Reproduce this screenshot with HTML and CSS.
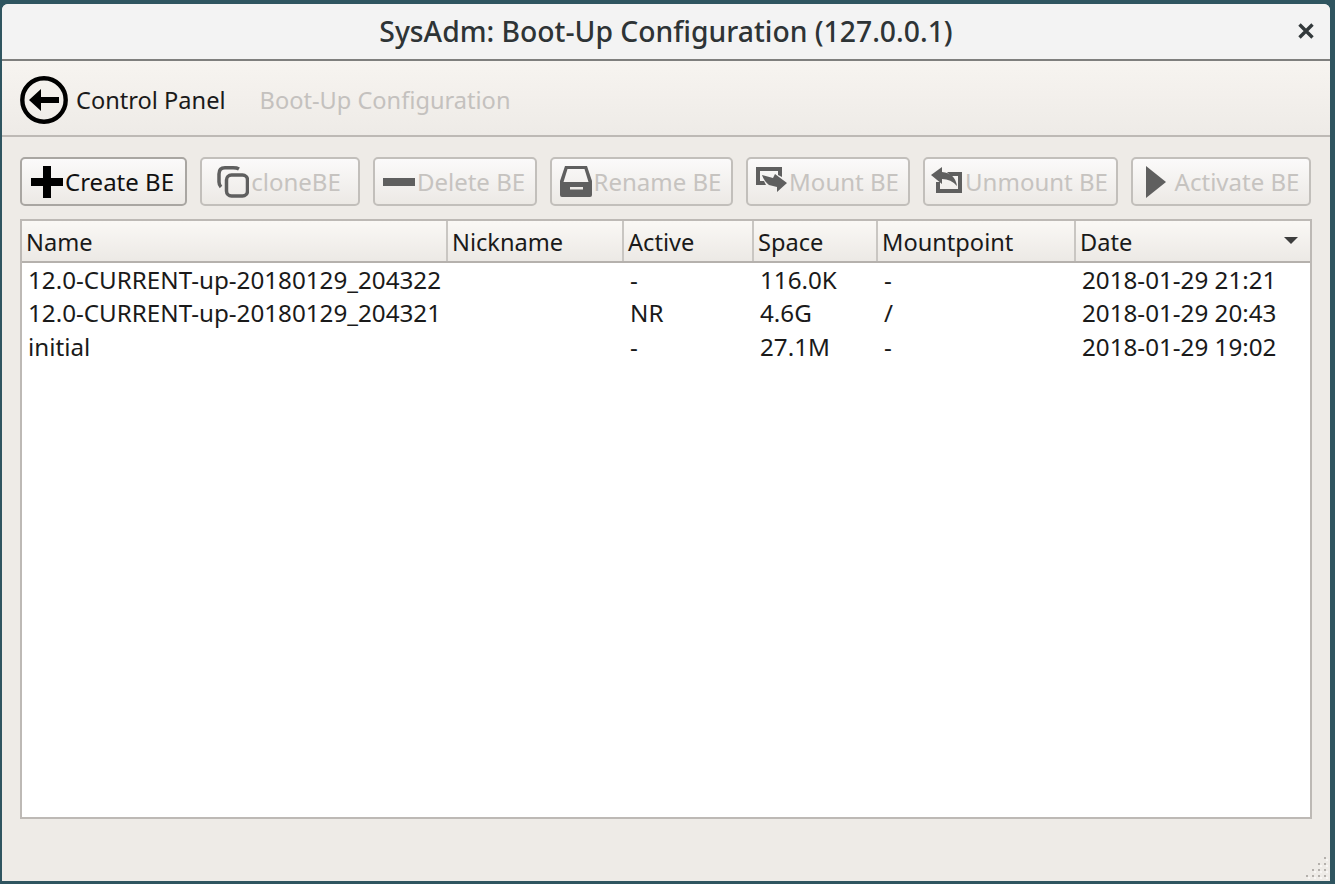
FILE: index.html
```html
<!doctype html>
<html>
<head>
<title>SysAdm: Boot-Up Configuration (127.0.0.1)</title>
<link rel="stylesheet" href="styles.css">
</head>
<body>

<div class="window">

  <div class="titlebar">
    <span class="title">SysAdm: Boot-Up Configuration (127.0.0.1)</span>
    <svg class="close" width="16" height="16" viewBox="0 0 16 16"><path d="M1.5 1.5 L14.500 14.500 M14.500 1.500 L1.500 14.500" stroke="#33393b" stroke-width="3.4" fill="none"/></svg>
  </div>

  <div class="crumbs">
    <svg class="back" width="50" height="50" viewBox="0 0 50 50">
      <circle cx="25" cy="25" r="21.7" stroke="#000" stroke-width="4.4" fill="none"/>
      <path d="M10 25 L22 14 V22 H40 V28 H22 V36 Z" fill="#000"/>
    </svg>
    <span class="crumb">Control Panel</span>
    <span class="crumb off">Boot-Up Configuration</span>
  </div>

  <div class="content">
    <div class="toolbar">
      <button class="btn on">
        <svg width="32" height="32" viewBox="0 0 32 32"><path d="M12 0 H20 V12 H32 V20 H20 V32 H12 V20 H0 V12 H12 Z" fill="#000"/></svg>
        <span>Create BE</span>
      </button>
      <button class="btn">
        <svg width="32" height="32" viewBox="0 0 32 32" fill="none" stroke="#5f5f5f" stroke-width="3.5"><path d="M22 3 Q20 1.800 16 1.800 H8 Q2 1.800 2 8 V16 Q2 19 4 21"/><rect x="9.500" y="9" width="21" height="21" rx="5"/></svg>
        <span>cloneBE</span>
      </button>
      <button class="btn">
        <svg width="32" height="32" viewBox="0 0 32 32"><rect x="0" y="12" width="32" height="8" fill="#5f5f5f"/></svg>
        <span>Delete BE</span>
      </button>
      <button class="btn">
        <svg width="32" height="32" viewBox="0 0 32 32"><path d="M5 0 H27 L32 15 V29 Q32 31 30 31 H2 Q0 31 0 29 V15 Z M7.500 3 L3.500 16 H28.500 L24.500 3 Z" fill="#5f5f5f" fill-rule="evenodd"/><rect x="10" y="21" width="13" height="2.500" fill="#eeebe7"/></svg>
        <span>Rename BE</span>
      </button>
      <button class="btn">
        <svg width="32" height="32" viewBox="0 0 32 32" fill="#5f5f5f"><path d="M1 1 H27 V11 L23 9 V5 H5 V15 H9 L11 19 H1 Z"/><path d="M7 9 L18 12 L20 8 L32 17 L22 26 L22 21 L14 19 Q9 15 7 9 Z"/></svg>
        <span>Mount BE</span>
      </button>
      <button class="btn">
        <svg width="32" height="32" viewBox="0 0 32 32" fill="#5f5f5f"><path d="M16 6 H31 V27 H5 V16 H9 V23 H27 V10 H20 Z"/><path d="M0 9 L11 1 V6 Q24 7 26 20 Q20 13 11 13 V18 Z"/></svg>
        <span>Unmount BE</span>
      </button>
      <button class="btn">
        <svg width="32" height="32" viewBox="0 0 32 32"><path d="M5 0 L25 16 L5 32 Z" fill="#5f5f5f"/></svg>
        <span>Activate BE</span>
      </button>
    </div>

    <div class="list">
      <table>
        <colgroup>
          <col class="c-name"><col class="c-nick"><col class="c-active"><col class="c-space"><col class="c-mount"><col>
        </colgroup>
        <thead>
          <tr>
            <th>Name</th>
            <th>Nickname</th>
            <th>Active</th>
            <th>Space</th>
            <th>Mountpoint</th>
            <th class="sorted">Date<i class="arrow"></i></th>
          </tr>
        </thead>
        <tbody>
          <tr><td>12.0-CURRENT-up-20180129_204322</td><td></td><td>-</td><td>116.0K</td><td>-</td><td>2018-01-29 21:21</td></tr>
          <tr><td>12.0-CURRENT-up-20180129_204321</td><td></td><td>NR</td><td>4.6G</td><td>/</td><td>2018-01-29 20:43</td></tr>
          <tr><td>initial</td><td></td><td>-</td><td>27.1M</td><td>-</td><td>2018-01-29 19:02</td></tr>
        </tbody>
      </table>
    </div>
  </div>

  <svg class="grip" width="22" height="22" viewBox="0 0 22 22">
    <g fill="#f8f6f4">
      <rect x="20" y="2" width="2" height="2"/>
      <rect x="14" y="8" width="2" height="2"/><rect x="20" y="8" width="2" height="2"/>
      <rect x="8" y="14" width="2" height="2"/><rect x="14" y="14" width="2" height="2"/><rect x="20" y="14" width="2" height="2"/>
      <rect x="2" y="20" width="2" height="2"/><rect x="8" y="20" width="2" height="2"/><rect x="14" y="20" width="2" height="2"/><rect x="20" y="20" width="2" height="2"/>
    </g>
    <g fill="#b4b0ac">
      <rect x="18" y="0" width="2" height="2"/>
      <rect x="12" y="6" width="2" height="2"/><rect x="18" y="6" width="2" height="2"/>
      <rect x="6" y="12" width="2" height="2"/><rect x="12" y="12" width="2" height="2"/><rect x="18" y="12" width="2" height="2"/>
      <rect x="0" y="18" width="2" height="2"/><rect x="6" y="18" width="2" height="2"/><rect x="12" y="18" width="2" height="2"/><rect x="18" y="18" width="2" height="2"/>
    </g>
  </svg>
</div>

</body>
</html>
```
FILE: styles.css
```css
/* desktop behind the window */
html, body {
  height: 100%;
}

body {
  margin: 0;
  padding: 4px 5px 3px 2px;
  box-sizing: border-box;
  background: #2f5560;
  font-family: "Noto Sans", "Open Sans", sans-serif;
  font-size: 24px;
  color: #1a1a1a;
  overflow: hidden;
}

.window {
  position: relative;
  height: 100%;
  display: flex;
  flex-direction: column;
  background: #eeebe7;
  border-radius: 6px 6px 0 0;
}

.titlebar {
  height: 57px;
  flex: none;
  box-sizing: border-box;
  padding-bottom: 2px;
  display: flex;
  align-items: center;
  justify-content: center;
  background: #f3f3f3;
  border-bottom: 2px solid #7f7f7d;
  border-radius: 6px 6px 0 0;
  position: relative;
}

.title {
  font-size: 28.3px;
  font-weight: 500;
  color: #2e3436;
}

.close {
  position: absolute;
  right: 16px;
  top: 19px;
}

.crumbs {
  height: 76px;
  flex: none;
  box-sizing: border-box;
  display: flex;
  align-items: center;
  padding: 4px 0 0 17px;
  font-size: 23.6px;
  background: linear-gradient(#f7f4f0, #eeebe7);
  border-bottom: 2px solid #bdb9b5;
}

.back {
  margin-right: 7px;
}

.crumb {
  margin-right: 34px;
  color: #1a1a1a;
}

.crumb.off {
  color: #c4c1be;
}

.content {
  padding: 20px 18px 0 18px;
}

.toolbar {
  display: grid;
  grid-template-columns: 167px 160px 164px 183px 164px 195px 180px;
  column-gap: 13px;
  height: 49px;
}

.btn {
  display: flex;
  align-items: center;
  justify-content: center;
  gap: 2px;
  padding: 0 2px 0 0;
  border: 2px solid #c2bfbb;
  border-radius: 5px;
  background: linear-gradient(#fbfafa, #ece9e5);
  font: inherit;
  color: #c6c3c0;
}

.btn.on {
  border-color: #a9a6a2;
  color: #111;
}

.list {
  margin-top: 13px;
  height: 600px;
  box-sizing: border-box;
  border: 2px solid #bdb9b5;
  background: #fff;
}

table {
  width: 100%;
  border-collapse: collapse;
  table-layout: fixed;
}

.c-name { width: 425px; }
.c-nick { width: 176px; }
.c-active { width: 130px; }
.c-space { width: 124px; }
.c-mount { width: 198px; }

th {
  height: 41px;
  padding: 1px 0 0 4px;
  box-sizing: border-box;
  text-align: left;
  font-size: 23.6px;
  font-weight: 400;
  white-space: nowrap;
  background: linear-gradient(#faf8f5, #ece9e5);
  border-right: 2px solid #c9c6c2;
  border-bottom: 2px solid #b5b1ad;
  color: #1a1a1a;
}

th:last-child {
  border-right: 0;
}

.sorted {
  position: relative;
}

.arrow {
  position: absolute;
  right: 12px;
  top: 16px;
  border-left: 7px solid transparent;
  border-right: 7px solid transparent;
  border-top: 7px solid #3d3d3d;
}

td {
  height: 34px;
  padding: 0 0 0 7px;
  box-sizing: border-box;
  font-size: 24.2px;
  line-height: 30px;
  white-space: nowrap;
}

td:first-child {
  padding-left: 6px;
}

.grip {
  position: absolute;
  right: 2px;
  bottom: 2px;
}
```
